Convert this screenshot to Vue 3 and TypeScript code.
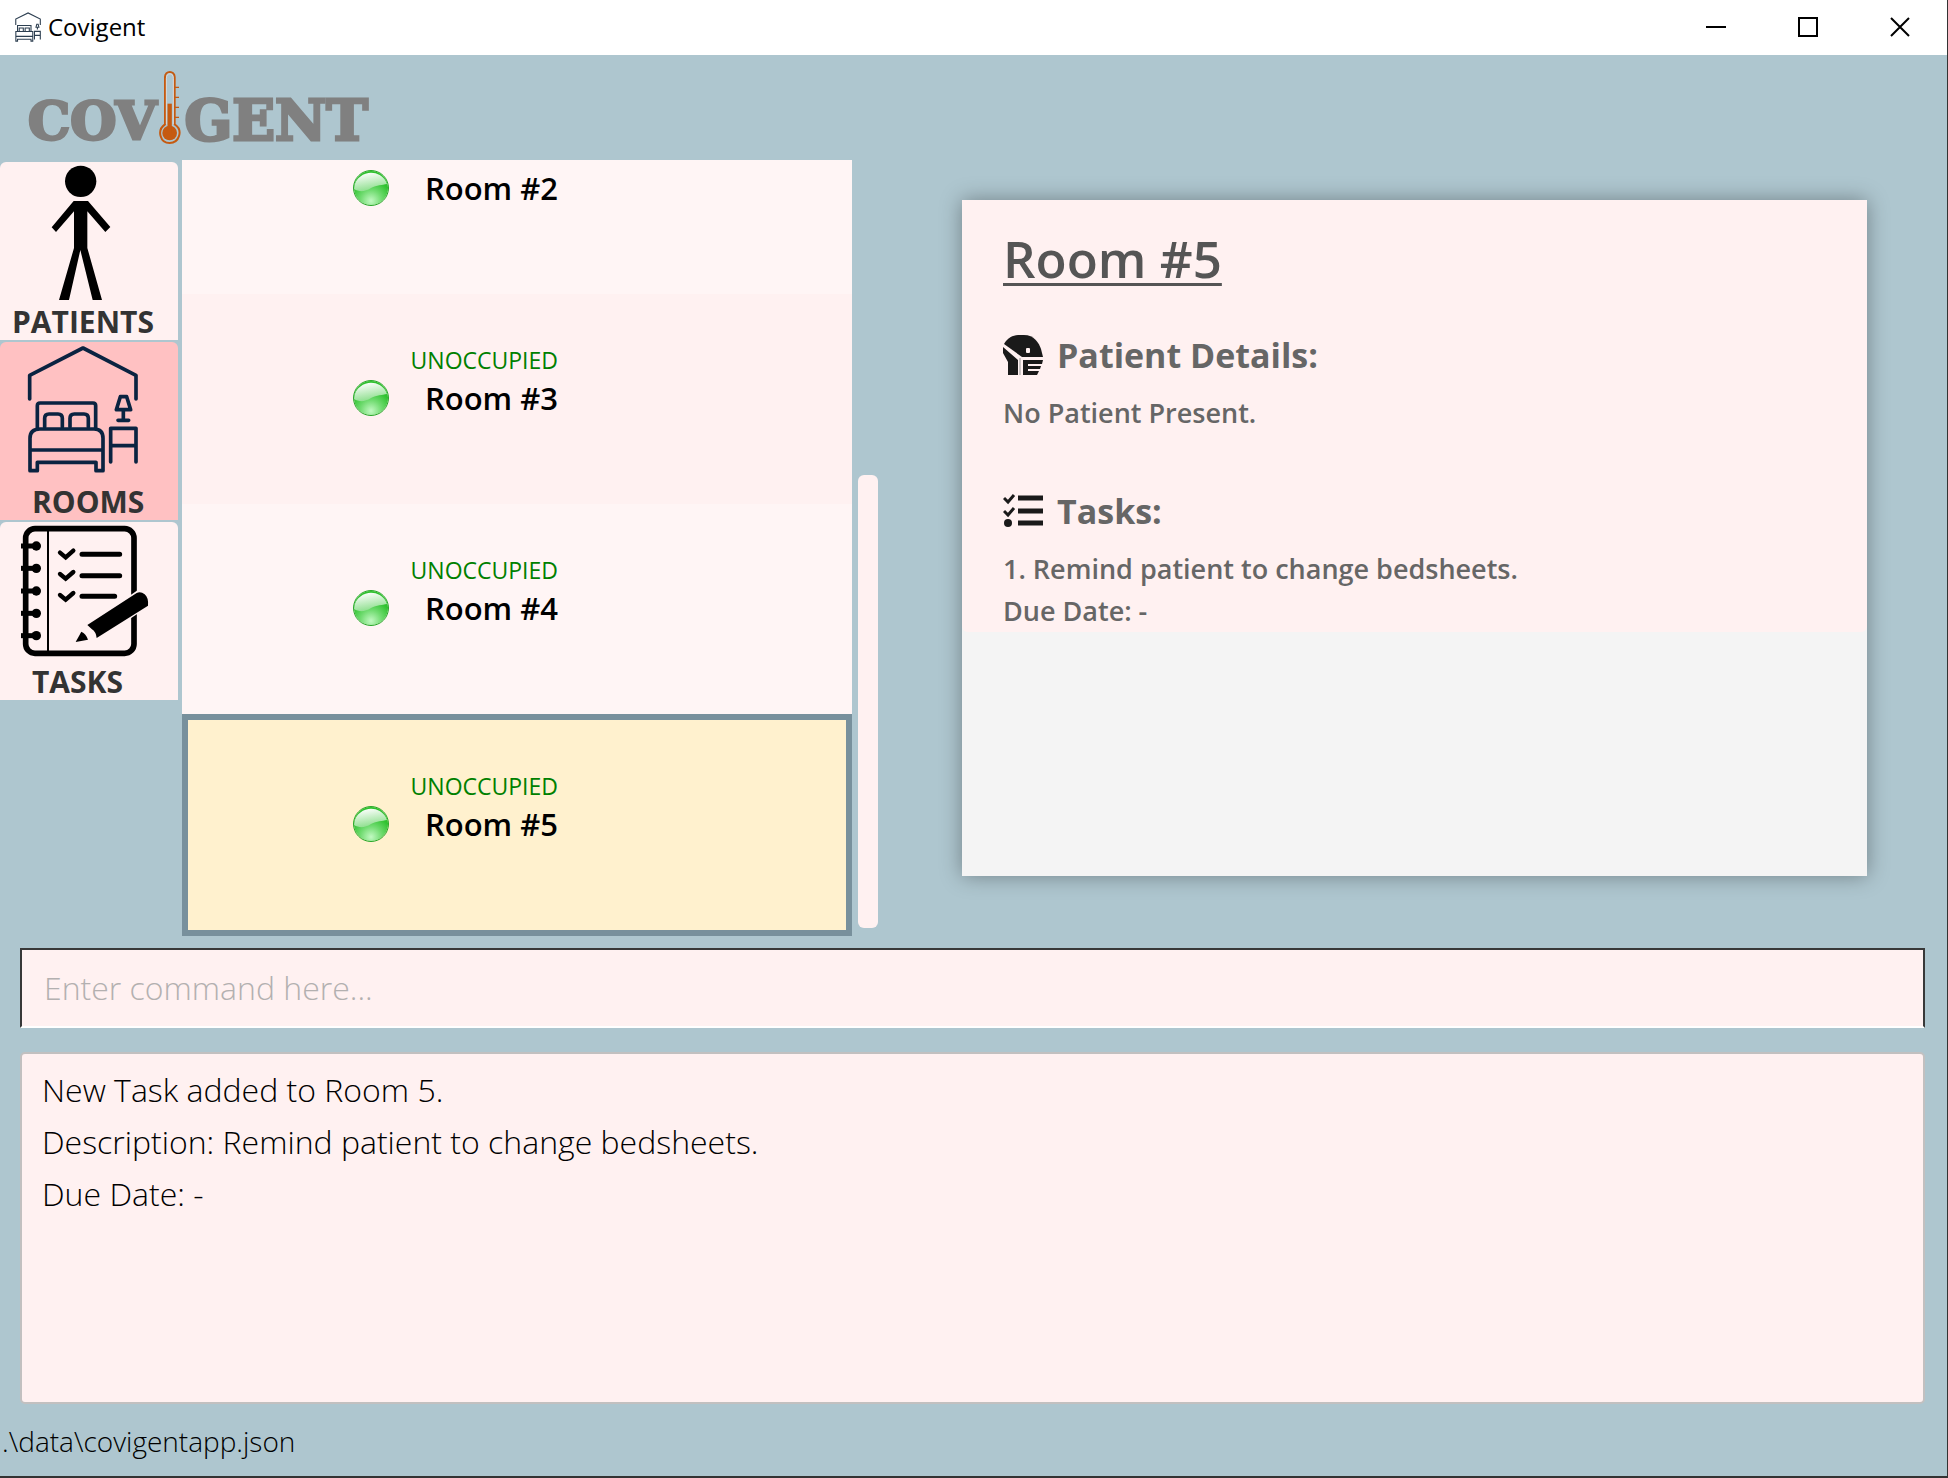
<script setup lang="ts">
import { ref } from 'vue'

interface Tab {
  id: string
  label: string
}

interface Room {
  number: number
  status?: string
}

interface Task {
  description: string
  dueDate: string
}

const tabs: Tab[] = [
  { id: 'patients', label: 'PATIENTS' },
  { id: 'rooms', label: 'ROOMS' },
  { id: 'tasks', label: 'TASKS' },
]

const rooms: Room[] = [
  { number: 2 },
  { number: 3, status: 'UNOCCUPIED' },
  { number: 4, status: 'UNOCCUPIED' },
  { number: 5, status: 'UNOCCUPIED' },
]

const tasks: Task[] = [{ description: 'Remind patient to change bedsheets.', dueDate: '-' }]

const activeTab = ref('rooms')
const selectedRoom = ref(5)
const command = ref('')
const feedback = ref(
  'New Task added to Room 5.\nDescription: Remind patient to change bedsheets.\nDue Date: -',
)
</script>

<template>
  <div class="window">
    <header class="titlebar">
      <svg class="app-icon" viewBox="80 28 336 390" aria-hidden="true">
        <g fill="none" stroke="#2c3e50" stroke-width="14">
          <path d="M89 196V120L249 40L408 120V196" />
          <path d="M112 280V204H287V280M134 278V237H187V278M211 278V237H265V278" />
          <path d="M90 407V282H310V407H287V382H112V407ZM90 345H310" />
          <path d="M332 384V280H408V384M332 332H408M370 256V226M352 226L362 188H380L390 226Z" />
        </g>
      </svg>
      <span class="app-name">Covigent</span>
      <div class="controls">
        <button type="button" aria-label="Minimize">
          <svg viewBox="0 0 20 20"><path d="M0 10H20" /></svg>
        </button>
        <button type="button" aria-label="Maximize">
          <svg viewBox="0 0 20 20"><path d="M1 1H19V19H1Z" /></svg>
        </button>
        <button type="button" aria-label="Close">
          <svg viewBox="0 0 20 20"><path d="M1 1L19 19M19 1L1 19" /></svg>
        </button>
      </div>
    </header>

    <div class="brand">
      <span>COV</span>
      <svg class="thermometer" viewBox="0 0 66 219" aria-hidden="true">
        <path
          d="M18 160V18C18 -2 47 -2 47 18V160C74 178 60 216 32 216C4 216 -8 178 18 160Z"
          fill="none" stroke="#c55a11" stroke-width="6"
        />
        <circle cx="32" cy="186" r="22" fill="#c55a11" />
        <path d="M32 98V186" stroke="#c55a11" stroke-width="13" />
        <path d="M47 49H60M47 79H60M47 109H60M47 139H60" stroke="#c55a11" stroke-width="4" />
        <path d="M22 160V22C22 4 43 4 43 22V160" fill="none" stroke="#d9d9d9" stroke-width="3" />
      </svg>
      <span class="brand-end">GENT</span>
    </div>

    <main class="workspace">
      <nav class="tabs" aria-label="Sections">
        <button
          v-for="tab in tabs" :key="tab.id" type="button" class="tab"
          :class="[tab.id, { active: tab.id === activeTab }]" @click="activeTab = tab.id"
        >
          <svg viewBox="0 0 534 426" aria-hidden="true">
            <g v-if="tab.id === 'patients'" transform="translate(0 -36)">
              <circle cx="242" cy="94" r="47" />
              <path d="M221 153H264L331 231L316 246L262 184V294L306 450H278L241 300L207 450H177L222 294V184L168 246L155 232Z" />
            </g>
            <g
              v-else-if="tab.id === 'rooms'" transform="translate(0 -21)" fill="none"
              stroke="#0a2341" stroke-width="11" stroke-linejoin="round" stroke-linecap="round"
            >
              <path d="M89 192V121L249 39L408 121V192" />
              <path d="M112 278V212Q112 204 120 204H279Q287 204 287 212V278" />
              <path d="M134 276V250Q134 237 147 237H174Q187 237 187 250V276M210 276V250Q210 237 223 237H252Q265 237 265 250V276" />
              <path d="M90 407V310Q90 282 120 282H282Q309 282 309 310V407H288V382H112V407ZM90 345H309" />
              <path d="M332 381V280H408V381M332 332H408M370 254V226M354 256H386M349 224L361 185H380L392 224Z" />
            </g>
            <g v-else transform="translate(0 -21)">
              <rect x="77" y="41" width="325" height="374" rx="28" fill="none" stroke="#000" stroke-width="17" />
              <path d="M144 45V412" stroke="#000" stroke-width="6" />
              <g v-for="y in [93, 160, 228, 295, 362]" :key="y">
                <path :d="`M63 ${y}H110`" stroke="#000" stroke-width="15" />
                <circle cx="109" :cy="y" r="14" />
              </g>
              <g fill="none" stroke="#000" stroke-width="13" stroke-linecap="round">
                <path d="M180 113L197 127L220 107M180 177L197 191L220 171M180 240L197 254L220 234" />
                <path d="M246 118H359M246 182H359M246 244H344" stroke-width="15" />
              </g>
              <path class="halo" d="M220 388L240 345L418 222L452 270L290 378Z" />
              <path d="M262 330L410 234Q422 228 434 238Q446 248 444 272L290 369Q288 350 275 342Z" />
              <path d="M227 381L244 350Q258 356 264 374Z" />
            </g>
          </svg>
          <span>{{ tab.label }}</span>
        </button>
      </nav>

      <ul class="rooms-list">
        <li
          v-for="room in rooms" :key="room.number" class="room"
          :class="{ selected: room.number === selectedRoom }" @click="selectedRoom = room.number"
        >
          <span v-if="room.status" class="room-status">{{ room.status }}</span>
          <svg class="ball" viewBox="0 0 36 36" aria-hidden="true">
            <defs>
              <radialGradient :id="`ball${room.number}`" cx="50%" cy="88%" r="62%">
                <stop offset="0" stop-color="#c2f9c2" />
                <stop offset="0.5" stop-color="#72dc72" />
                <stop offset="1" stop-color="#2fc22f" />
              </radialGradient>
              <linearGradient :id="`shine${room.number}`" x1="0.3" y1="0" x2="0.6" y2="1">
                <stop offset="0" stop-color="#fff" />
                <stop offset="1" stop-color="#86dd86" />
              </linearGradient>
            </defs>
            <circle cx="18" cy="18" r="17" :fill="`url(#ball${room.number})`" />
            <path
              d="M1 19A17 17 0 0 1 34 14C29 15 24 15 18 18C12 22 6 22 1 19Z"
              :fill="`url(#shine${room.number})`"
            />
            <circle cx="18" cy="18" r="17.5" fill="none" stroke="#27a727" />
          </svg>
          <span class="room-name">Room #{{ room.number }}</span>
        </li>
      </ul>
      <div class="scroll-track"><div class="thumb"></div></div>

      <article class="details">
        <div class="details-body">
          <h1>Room #{{ selectedRoom }}</h1>
          <section>
            <h2>
              <svg viewBox="0 0 40 40" aria-hidden="true">
                <path d="M1 9C5 2 11 0 17 0H21C31 0 36 8 38 14L40 22H19Z" />
                <path d="M0 12L15 25V40H5V27L0 18Z" />
                <path d="M17 23V40" fill="none" stroke="#999" />
                <path d="M20 25H40L39 29H25V31H38L37 34H25V36H36L34 40H20Z" />
                <rect class="eye" x="23" y="13" width="4" height="5" rx="1" />
              </svg>
              Patient Details:
            </h2>
            <p>No Patient Present.</p>
          </section>
          <section>
            <h2>
              <svg viewBox="0 0 40 40" aria-hidden="true">
                <path d="M15 7H40M15 20H40M15 32H40" fill="none" stroke="#1a1a1a" stroke-width="5" />
                <path d="M1 7L5 11L11 4M1 20L5 24L11 17" fill="none" stroke="#1a1a1a" stroke-width="3" />
                <circle cx="5" cy="32" r="4" />
              </svg>
              Tasks:
            </h2>
            <template v-for="(task, index) in tasks" :key="index">
              <p>{{ index + 1 }}. {{ task.description }}</p>
              <p>Due Date: {{ task.dueDate }}</p>
            </template>
          </section>
        </div>
      </article>
    </main>

    <input v-model="command" class="command" type="text" placeholder="Enter command here..." aria-label="Command">
    <textarea v-model="feedback" class="feedback" readonly aria-label="Result"></textarea>
    <footer class="statusbar">.\data\covigentapp.json</footer>
  </div>
</template>

<style>
body {
  margin: 0;
}
</style>

<style scoped>
* {
  box-sizing: border-box;
}

.window {
  display: flex;
  flex-direction: column;
  height: 100vh;
  border-right: 1px solid #333;
  border-bottom: 2px solid #333;
  background: #aec6cf;
  font-family: "Open Sans", "Noto Sans", sans-serif;
  color: #000;
}

.titlebar {
  display: flex;
  align-items: center;
  flex: none;
  height: 55px;
  padding: 0 1px 2px 14px;
  background: #fff;
}

.app-icon {
  width: 28px;
  height: 30px;
}

.app-name {
  margin-left: 6px;
  font-size: 24px;
  line-height: 32px;
}

.controls {
  display: flex;
  margin-left: auto;
}

.controls button {
  display: grid;
  place-items: center;
  width: 92px;
  height: 52px;
  padding: 0;
  border: 0;
  background: none;
}

.controls svg {
  width: 20px;
  height: 20px;
  fill: none;
  stroke: #000;
  stroke-width: 2;
}

.brand {
  display: flex;
  align-items: flex-start;
  flex: none;
  height: 105px;
  padding: 16px 0 0 28px;
  font-family: "DejaVu Serif", serif;
  font-size: 53px;
  font-weight: bold;
  line-height: 64px;
  color: #808080;
  -webkit-text-stroke: 3px #808080;
}

.brand span {
  padding-top: 17px;
}

.brand .brand-end {
  font-size: 56px;
}

.thermometer {
  flex: none;
  width: 22px;
  height: 73px;
  margin: 0 4px 0 2px;
}

.workspace {
  display: flex;
  flex: 1;
  min-height: 0;
}

.tabs {
  display: flex;
  flex: none;
  flex-direction: column;
  gap: 2px;
  width: 182px;
  padding: 2px 4px 0 0;
}

.tab {
  display: flex;
  flex-direction: column;
  height: 178px;
  padding: 0;
  border: 0;
  border-radius: 6px 6px 0 0;
  background: #fff1f1;
  font: bold 30px/36px "Open Sans", sans-serif;
  color: #333;
  text-align: left;
}

.tab.active {
  background: #ffc1c2;
}

.tab svg {
  width: 178px;
  height: 142px;
}

.tab span {
  padding-left: 32px;
}

.tab.patients span {
  padding-left: 12px;
}

.halo {
  fill: #fff1f1;
}

.rooms-list {
  display: flex;
  flex: 670 1 0;
  flex-direction: column;
  justify-content: flex-end;
  margin: 0;
  padding: 0;
  overflow: hidden;
  list-style: none;
}

.room {
  display: grid;
  flex: none;
  grid-template-columns: 36px 169px;
  grid-template-rows: 36px 40px;
  align-content: start;
  align-items: center;
  height: 210px;
  padding: 48px 0 0 171px;
  background: #fff5f5;
  text-align: right;
}

.room:nth-child(even) {
  background: #fff1f1;
}

.room.selected {
  height: 222px;
  padding-left: 165px;
  border: 6px solid #78909c;
  background: #fff1ce;
}

.room-status {
  grid-column: 1 / 3;
  font-size: 23px;
  line-height: 36px;
  color: #008000;
}

.ball {
  grid-row: 2;
  width: 36px;
  height: 36px;
}

.room-name {
  grid-row: 2;
  font-size: 31px;
  font-weight: 600;
  line-height: 40px;
}

.scroll-track {
  display: flex;
  flex: none;
  flex-direction: column;
  justify-content: flex-end;
  width: 26px;
  padding: 0 0 8px 6px;
}

.thumb {
  height: 59%;
  border-radius: 6px;
  background: #fff1f1;
}

.details {
  flex: 905 1 0;
  margin: 40px 80px 60px 84px;
  background: #f4f4f4;
  box-shadow: 0 0 20px rgba(0, 0, 0, 0.35);
}

.details-body {
  padding: 28px 41px 0;
  border-radius: 0 0 6px 6px;
  background: #fff1f1;
  color: #666;
}

h1 {
  margin: 0 0 47px;
  font-size: 51px;
  font-weight: 600;
  line-height: 60px;
  color: #555;
  text-decoration: underline;
  text-decoration-thickness: 3px;
  text-underline-offset: 5px;
  text-decoration-skip-ink: none;
}

section + section {
  margin-top: 57px;
}

h2 {
  display: flex;
  gap: 14px;
  margin: 0 0 17px;
  font-size: 34px;
  font-weight: bold;
  line-height: 40px;
}

h2 svg {
  width: 40px;
  height: 40px;
  fill: #1a1a1a;
}

h2 .eye {
  fill: #fff1f1;
}

p {
  margin: 0;
  font-size: 27px;
  font-weight: 600;
  line-height: 42px;
}

.command {
  flex: none;
  height: 80px;
  margin: 12px 22px 24px 20px;
  padding: 0 22px 2px;
  border: 2px solid #383838;
  border-bottom-color: #fff;
  border-radius: 0;
  outline: 0;
  background: #fff1f1;
  font: 300 32px/52px "Open Sans", sans-serif;
  color: #000;
}

.command::placeholder {
  color: #b3b0b0;
  opacity: 1;
}

.feedback {
  display: block;
  flex: none;
  height: 352px;
  margin: 0 22px 0 20px;
  padding: 10px 20px;
  border: 2px solid #c2c0c0;
  border-radius: 5px;
  outline: 0;
  background: #fff1f1;
  font: 300 32px/52px "Open Sans", sans-serif;
  color: #000;
  resize: none;
}

.statusbar {
  flex: none;
  height: 72px;
  padding: 17px 2px 15px;
  font-size: 28px;
  font-weight: 300;
  line-height: 40px;
}
</style>
